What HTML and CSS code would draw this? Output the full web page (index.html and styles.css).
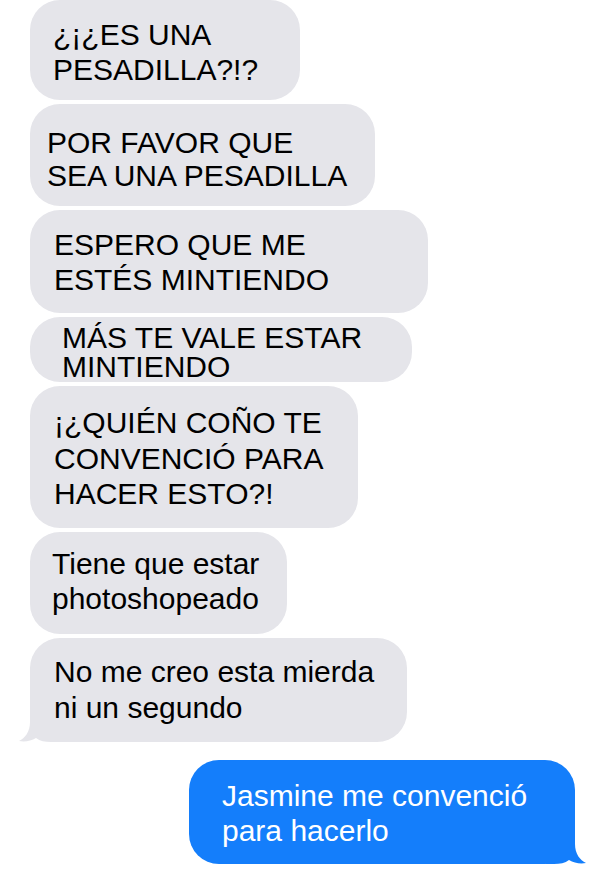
FILE: index.html
```html
<!DOCTYPE html>
<html lang="es">
<head>
<meta charset="utf-8">
<title>Mensajes</title>
<link rel="stylesheet" href="styles.css">
</head>
<body>
<main class="thread">
  <div class="bubble in b1"><span class="text">¿¡¿ES UNA<br>PESADILLA?!?</span></div>
  <div class="bubble in b2"><span class="text">POR FAVOR QUE<br>SEA UNA PESADILLA</span></div>
  <div class="bubble in b3"><span class="text">ESPERO QUE ME<br>ESTÉS MINTIENDO</span></div>
  <div class="bubble in b4"><span class="text">MÁS TE VALE ESTAR<br>MINTIENDO</span></div>
  <div class="bubble in b5"><span class="text">¡¿QUIÉN COÑO TE<br>CONVENCIÓ PARA<br>HACER ESTO?!</span></div>
  <div class="bubble in b6"><span class="text">Tiene que estar<br>photoshopeado</span></div>
  <div class="bubble in b7">
    <svg class="tail tail-l" width="40" height="30" viewBox="0 0 40 30" aria-hidden="true"><path d="M11 0 H40 V30 H32 C26 30 21 29 17 26 C12 29 6 30 0 29 C6 26 11 20 11 10 Z"/></svg>
    <span class="text">No me creo esta mierda<br>ni un segundo</span>
  </div>
  <div class="bubble out b8">
    <svg class="tail tail-r" width="40" height="30" viewBox="0 0 40 30" aria-hidden="true"><path d="M29 0 H0 V30 H8 C14 30 19 29 23 26 C28 29 34 30 40 29 C34 26 29 20 29 10 Z"/></svg>
    <span class="text">Jasmine me convenció<br>para hacerlo</span>
  </div>
</main>
</body>
</html>
```
FILE: styles.css
```css
* { box-sizing: border-box; }

html, body {
  margin: 0;
  padding: 0;
  background: #ffffff;
}

.thread {
  display: flex;
  flex-direction: column;
  align-items: flex-start;
  gap: 4px;
  padding: 0 30px 0 30px;
  font-family: "Liberation Sans", Arial, sans-serif;
  font-size: 30px;
}

.bubble {
  position: relative;
  border-radius: 30px;
  line-height: 35px;
  white-space: nowrap;
}

.text {
  position: relative;
  z-index: 1;
}

.in {
  background: #e5e5ea;
  color: #000;
}

.out {
  align-self: flex-end;
  background: #147efb;
  color: #fff;
  margin-top: 14px;
}

.tail {
  position: absolute;
  bottom: 0;
  z-index: 0;
}
.tail-l { left: -11px; fill: #e5e5ea; }
.tail-r { right: -11px; fill: #147efb; }

.b1 { width: 270px; padding: 17px 0 13px 23px; }
.b2 { width: 345px; padding: 22px 0 14px 17px; line-height: 33px; }
.b3 { width: 398px; padding: 17px 0 16px 24px; }
.b4 { width: 382px; padding: 6px 0 1px 32px; line-height: 29px; }
.b5 { width: 328px; padding: 19px 0 16px 24px; line-height: 35.5px; }
.b6 { width: 257px; padding: 14px 0 18px 22px; }
.b7 { width: 377px; padding: 16px 0 16px 24px; line-height: 36px; }
.b8 { width: 386px; padding: 18px 0 16px 33px; }
```
